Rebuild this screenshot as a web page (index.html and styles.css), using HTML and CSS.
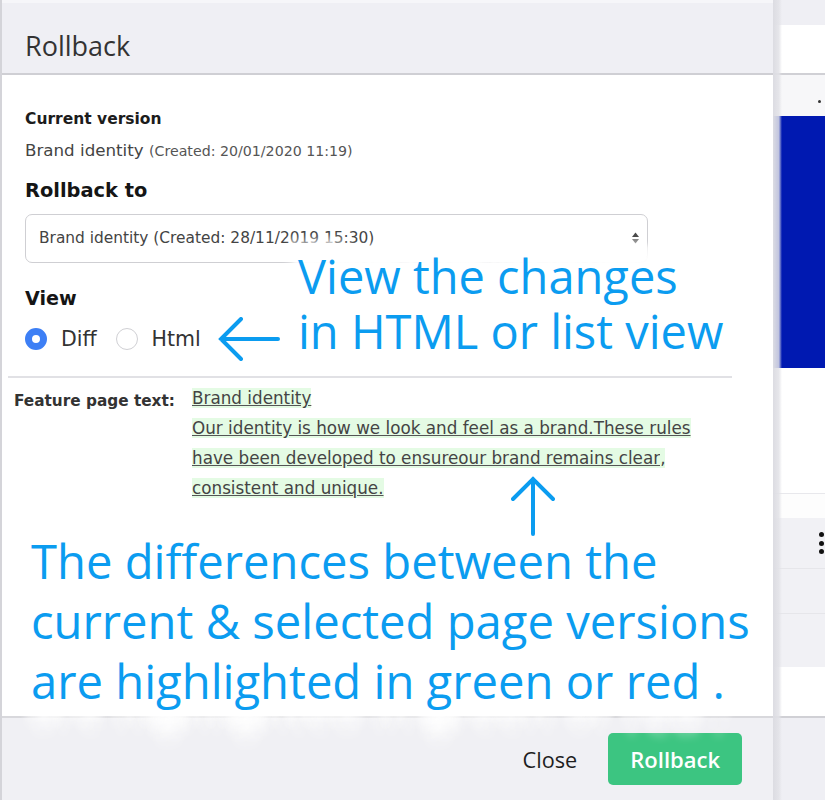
FILE: index.html
```html
<!DOCTYPE html>
<html lang="en">
<head>
<meta charset="utf-8">
<title>Rollback</title>
<link rel="stylesheet" href="styles.css">
</head>
<body>
<div class="screen">
  <section class="modal">
    <header class="modal-header">
      <h1 class="modal-title">Rollback</h1>
    </header>
    <div class="modal-body">
      <div class="form">
        <div class="field-label">Current version</div>
        <div class="current-value">Brand identity <span class="created">(Created: 20/01/2020 11:19)</span></div>
        <h2 class="section-title">Rollback to</h2>
        <div class="select">
          <span class="select-text">Brand identity (Created: 28/11/2019 15:30)</span>
          <svg class="select-caret" viewBox="0 0 7 12" width="7" height="12"><path d="M3.5 0.5 L7 5 H0 Z" fill="#4a4a4a"/><path d="M0 7 H7 L3.5 11.5 Z" fill="#8a8a8a"/></svg>
        </div>
        <h2 class="view-title">View</h2>
        <div class="radio-row">
          <label class="radio"><span class="radio-dot checked"></span>Diff</label>
          <label class="radio"><span class="radio-dot"></span>Html</label>
          <svg class="arrow-left" width="62" height="44" viewBox="0 0 62 44"><path d="M60 22 H3 M23 2 L3 22 L23 42" fill="none" stroke="#0b9cf0" stroke-width="4" stroke-linecap="round" stroke-linejoin="miter"/></svg>
        </div>
        <p class="note note-top"><span class="note-line glow-up">View the changes</span><span class="note-line">in HTML or list view</span></p>
      </div>
      <hr class="divider">
      <div class="diff">
        <div class="diff-label">Feature page text:</div>
        <div class="diff-text">
          <ins>Brand identity</ins><br>
          <ins>Our identity is how we look and feel as a brand.These rules</ins><br>
          <ins>have been developed to ensureour brand remains clear</ins><span class="added">,</span><br>
          <ins>consistent and unique.</ins>
        </div>
        <svg class="arrow-up" width="44" height="60" viewBox="0 0 44 60"><path d="M22 58 V3 M2 23 L22 3 L42 23" fill="none" stroke="#0b9cf0" stroke-width="4" stroke-linecap="round" stroke-linejoin="miter"/></svg>
      </div>
      <p class="note note-bottom"><span class="note-line">The differences between the</span><span class="note-line">current &amp; selected page versions</span><span class="note-line glow-down">are highlighted in green or red .</span></p>
    </div>
    <footer class="modal-footer">
      <button class="btn-link" type="button">Close</button>
      <button class="btn-primary" type="button">Rollback</button>
    </footer>
  </section>
  <aside class="backdrop">
    <div class="bd-top"></div>
    <div class="bd-white"></div>
    <div class="bd-line"></div>
    <div class="bd-toolbar"><span class="bd-dot"></span></div>
    <div class="bd-blue"></div>
    <div class="bd-space"></div>
    <div class="bd-thin"></div>
    <div class="bd-row"></div>
    <div class="bd-menu bd-menu-first">
      <span class="kebab"><i></i><i></i><i></i></span>
    </div>
    <div class="bd-menu bd-menu-mid"></div>
    <div class="bd-menu bd-menu-last"></div>
    <div class="bd-white2"></div>
    <div class="bd-line"></div>
    <div class="bd-foot"></div>
  </aside>
</div>
</body>
</html>
```

FILE: styles.css
```css
* { box-sizing: border-box; }
html, body { margin: 0; padding: 0; }
body {
  width: 825px;
  height: 800px;
  overflow: hidden;
  background: #fff;
  font-family: "DejaVu Sans", Verdana, sans-serif;
}
.screen { display: flex; width: 825px; height: 800px; }

/* modal */
.modal {
  width: 773px;
  height: 800px;
  flex: none;
  display: flex;
  flex-direction: column;
  background: #fff;
  border-left: 2px solid #d4d4d9;
  position: relative;
  z-index: 2;
}
.modal::after {
  content: "";
  position: absolute;
  top: 0;
  right: -9px;
  width: 9px;
  height: 100%;
  background: linear-gradient(to right, rgba(220,220,226,1), rgba(226,226,231,0.85) 65%, rgba(230,230,235,0));
}
.modal-header {
  height: 75px;
  flex: none;
  background: #efeff4;
  border-top: 3px solid #f6f6f9;
  border-bottom: 2px solid #cfcfd4;
  padding: 27px 0 0 23px;
}
.modal-title {
  margin: 0;
  font-family: "Open Sans", sans-serif;
  font-weight: 400;
  font-size: 27px;
  line-height: 32px;
  color: #333;
}
.modal-body { flex: 1; position: relative; z-index: 1; }

.form { position: relative; padding: 33.6px 0 0 23px; }
.field-label { font-weight: bold; font-size: 15.5px; line-height: 20px; color: #1c1c1c; }
.current-value { margin-top: 10.6px; font-size: 16.7px; line-height: 22px; color: #444; }
.created { font-size: 14.2px; color: #555; }
.section-title {
  margin: 16.8px 0 0;
  font-size: 19.4px;
  line-height: 24px;
  font-weight: bold;
  color: #151515;
}
.select {
  margin-top: 11px;
  width: 623px;
  height: 49px;
  border: 1.5px solid #cfcfd3;
  border-radius: 7px;
  display: flex;
  align-items: center;
  justify-content: space-between;
  padding: 0 8px 0 13px;
}
.select-text { font-size: 15.4px; line-height: 20px; color: #444; }
.select-caret { display: block; }
.view-title {
  margin: 24.5px 0 0;
  font-size: 19.1px;
  line-height: 24px;
  font-weight: bold;
  color: #151515;
}
.radio-row { margin-top: 12.5px; height: 30px; display: flex; align-items: center; }
.radio {
  display: flex;
  align-items: center;
  gap: 14px;
  font-size: 20.5px;
  color: #333;
  margin-right: 19px;
}
.radio-dot {
  width: 22px;
  height: 22px;
  border-radius: 50%;
  border: 1.5px solid #d0d0d4;
  background: #fff;
  flex: none;
}
.radio-dot.checked { border: 7px solid #3d7ff5; }
.arrow-left { display: block; margin-left: -2px; }

/* annotations carry a soft white halo, as pasted callouts do */
.note {
  margin: 0;
  font-family: "Open Sans", sans-serif;
  font-weight: 400;
  color: #0b9cf0;
  white-space: nowrap;
}
.note-line { display: block; text-shadow: 0 0 4px #fff, 0 0 8px rgba(255,255,255,.8); }
.note-line.glow-up {
  text-shadow:
    0 0 4px #fff,
    -8px -6px 5px rgba(255,255,255,.85),
    0 -6px 5px rgba(255,255,255,.85),
    8px -6px 5px rgba(255,255,255,.85),
    -8px -12px 5px rgba(255,255,255,.85),
    0 -12px 5px rgba(255,255,255,.85),
    8px -12px 5px rgba(255,255,255,.85),
    -8px -18px 5px rgba(255,255,255,.8),
    0 -18px 5px rgba(255,255,255,.8),
    8px -18px 5px rgba(255,255,255,.8),
    -8px -23px 5px rgba(255,255,255,.7),
    0 -23px 5px rgba(255,255,255,.7),
    8px -23px 5px rgba(255,255,255,.7),
    -14px -10px 6px rgba(255,255,255,.6),
    14px -10px 6px rgba(255,255,255,.6);
}
.note-line.glow-down {
  text-shadow:
    0 0 4px #fff,
    -8px 6px 5px rgba(255,255,255,.85),
    0 6px 5px rgba(255,255,255,.85),
    8px 6px 5px rgba(255,255,255,.85),
    -8px 13px 6px rgba(255,255,255,.85),
    0 13px 6px rgba(255,255,255,.85),
    8px 13px 6px rgba(255,255,255,.85),
    -8px 20px 7px rgba(255,255,255,.75),
    0 20px 7px rgba(255,255,255,.75),
    8px 20px 7px rgba(255,255,255,.75),
    -6px 28px 9px rgba(255,255,255,.6),
    6px 28px 9px rgba(255,255,255,.6),
    0 36px 10px rgba(255,255,255,.5);
}
.note-top {
  position: absolute;
  left: 296px;
  top: 174.3px;
  font-size: 47px;
  line-height: 55px;
}

.divider {
  margin: 22px 41px 0 6px;
  border: 0;
  height: 2px;
  background: #e1e1e5;
}

.diff {
  position: relative;
  display: grid;
  grid-template-columns: 178px 1fr;
  margin-top: 5.2px;
  padding-left: 12px;
}
.diff-label {
  font-weight: bold;
  font-size: 15.3px;
  line-height: 30px;
  padding-top: 2.5px;
  color: #333;
}
.diff-text { font-size: 16.8px; line-height: 30px; color: #444; }
.diff-text ins {
  text-decoration: underline;
  text-decoration-color: #555;
  background: #e4fbe4;
}
.diff-text .added { background: #e4fbe4; }
.arrow-up { position: absolute; left: 509px; top: 92.8px; }

.note-bottom {
  position: relative;
  z-index: 1;
  margin-top: 27.5px;
  padding-left: 29px;
  font-size: 47.2px;
  line-height: 60px;
}

.modal-footer {
  height: 84px;
  flex: none;
  background: #f0f0f4;
  border-top: 2px solid #d8d8dc;
  display: flex;
  justify-content: flex-end;
  align-items: center;
  gap: 31px;
  padding-right: 31px;
}
.btn-link {
  border: 0;
  background: none;
  padding: 0;
  font-family: "Open Sans", sans-serif;
  font-size: 21.7px;
  color: #1e1e1e;
}
.btn-primary {
  height: 52px;
  padding: 0 22px;
  border: 0;
  border-radius: 5px;
  background: #3cc581;
  color: #fff;
  font-family: "Open Sans", sans-serif;
  font-size: 22px;
  font-weight: 600;
}

/* page behind the modal */
.backdrop { flex: 1; display: flex; flex-direction: column; background: #fff; }
.bd-top { height: 25px; background: #efeff4; }
.bd-white { height: 48px; background: #fff; }
.bd-line { height: 2px; background: #d0d0d5; }
.bd-toolbar {
  height: 41px;
  background: #f7f7f9;
  display: flex;
  justify-content: flex-end;
  padding: 25px 4px 0 0;
}
.bd-dot { width: 3px; height: 3px; border-radius: 50%; background: #333; }
.bd-blue { height: 252px; background: #0019b1; }
.bd-space { height: 125px; background: #fff; }
.bd-thin { height: 1px; background: #e8e8ec; }
.bd-row { height: 24px; background: #fdfdfd; }
.bd-menu { background: #f1f1f5; border-bottom: 1px solid #e6e6ea; }
.bd-menu-first {
  height: 51px;
  display: flex;
  justify-content: flex-end;
  align-items: center;
  padding-right: 1px;
}
.bd-menu-mid { height: 45px; }
.bd-menu-last { height: 53px; border-bottom: 0; }
.kebab { display: flex; flex-direction: column; gap: 3.5px; }
.kebab i { display: block; width: 5px; height: 5px; border-radius: 50%; background: #111; }
.bd-white2 { height: 49px; background: #fff; }
.bd-foot { flex: 1; background: #efeff4; }
```
